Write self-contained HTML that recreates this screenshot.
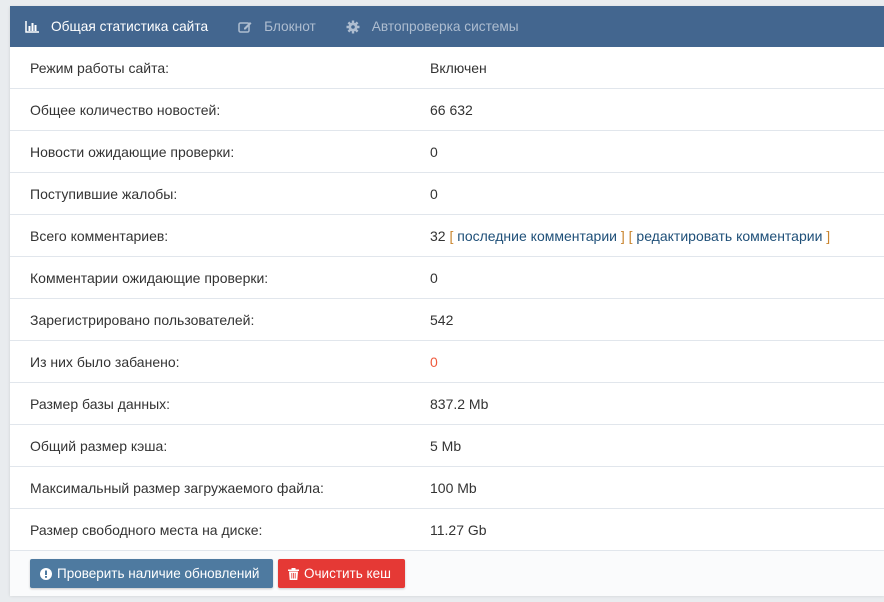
<!DOCTYPE html>
<html><head><meta charset="utf-8"><style>
*{box-sizing:border-box;margin:0;padding:0}
body{width:884px;height:602px;background:#e9ecef;font-family:"Liberation Sans",sans-serif;font-size:14px;color:#333;overflow:hidden;position:relative}
.panel{position:absolute;left:10px;top:6px;width:874px;height:589px;background:#fff;box-shadow:0 1px 3px rgba(0,0,0,.12)}
.hdr{height:41px;background:#43668f;display:flex;align-items:center;color:#aebdd0;font-size:13.7px}
.tab{display:flex;align-items:center;margin-right:30px;white-space:nowrap}
.tab svg{margin-right:12px}
.tab.act{color:#fff;margin-left:15px}
.row{height:42px;border-bottom:1px solid #e1e6ec;display:flex;align-items:center}
.l{width:420px;padding-left:20px}
.v{flex:1}
a{color:#1e4f78;text-decoration:none}
.b{color:#c9852e}
.foot{height:45px;background:#fafbfc;padding:8px 0 0 20px;display:flex}
.btn{height:29px;border-radius:2px;color:#fff;display:flex;align-items:center;padding:0 10px;font-size:13.5px;white-space:nowrap;box-shadow:0 1px 2px rgba(0,0,0,.2)}
</style></head><body>
<div class="panel">
<div class="hdr">
<div class="tab act"><svg width="14" height="12" viewBox="0 0 14 12"><path d="M1 0v11h13" stroke="#fff" stroke-width="1.5" fill="none"/><rect x="3.5" y="5" width="2" height="5" fill="#fff"/><rect x="6.5" y="2" width="2" height="8" fill="#fff"/><rect x="9.5" y="4" width="2" height="6" fill="#fff"/></svg>Общая статистика сайта</div>
<div class="tab"><svg width="14" height="12" viewBox="0 0 14 12"><rect x="1" y="2" width="10" height="9" rx="1.5" stroke="#aebdd0" stroke-width="1.5" fill="none"/><path d="M6 7l6-6 1.5 1.5-6 6H6z" fill="#aebdd0"/></svg>Блокнот</div>
<div class="tab"><svg width="14" height="14" viewBox="0 0 14 14"><circle cx="7" cy="7" r="4.5" fill="#aebdd0"/><path d="M7 0.5v13M0.5 7h13M2.4 2.4l9.2 9.2M11.6 2.4l-9.2 9.2" stroke="#aebdd0" stroke-width="2.4"/><circle cx="7" cy="7" r="1.8" fill="#43668f"/></svg>Автопроверка системы</div>
</div>
<div class="row"><div class="l">Режим работы сайта:</div><div class="v">Включен</div></div>
<div class="row"><div class="l">Общее количество новостей:</div><div class="v">66 632</div></div>
<div class="row"><div class="l">Новости ожидающие проверки:</div><div class="v">0</div></div>
<div class="row"><div class="l">Поступившие жалобы:</div><div class="v">0</div></div>
<div class="row"><div class="l">Всего комментариев:</div><div class="v">32 <span class="b">[</span> <a>последние комментарии</a> <span class="b">]</span> <span class="b">[</span> <a>редактировать комментарии</a> <span class="b">]</span></div></div>
<div class="row"><div class="l">Комментарии ожидающие проверки:</div><div class="v">0</div></div>
<div class="row"><div class="l">Зарегистрировано пользователей:</div><div class="v">542</div></div>
<div class="row"><div class="l">Из них было забанено:</div><div class="v" style="color:#ef5a3c">0</div></div>
<div class="row"><div class="l">Размер базы данных:</div><div class="v">837.2 Mb</div></div>
<div class="row"><div class="l">Общий размер кэша:</div><div class="v">5 Mb</div></div>
<div class="row"><div class="l">Максимальный размер загружаемого файла:</div><div class="v">100 Mb</div></div>
<div class="row"><div class="l">Размер свободного места на диске:</div><div class="v">11.27 Gb</div></div>
<div class="foot">
<div class="btn" style="background:#4e7aa0;width:243px"><svg width="12" height="12" viewBox="0 0 12 12" style="margin-right:5px;flex:none"><circle cx="6" cy="6" r="6" fill="#fff"/><rect x="5" y="2.5" width="2" height="4.5" fill="#4e7aa0"/><rect x="5" y="8" width="2" height="1.8" fill="#4e7aa0"/></svg>Проверить наличие обновлений</div>
<div class="btn" style="background:#e53935;width:127px;margin-left:5px"><svg width="11" height="12" viewBox="0 0 11 12" style="margin-right:5px;flex:none"><rect x="0" y="1.5" width="11" height="1.5" fill="#fff"/><rect x="3.5" y="0" width="4" height="2" fill="#fff"/><path d="M1 3.5h9l-.7 8.5H1.7z" fill="#fff"/><path d="M3.8 5v5.5M5.5 5v5.5M7.2 5v5.5" stroke="#e53935" stroke-width=".8"/></svg>Очистить кеш</div>
</div>
</div>
</body></html>
